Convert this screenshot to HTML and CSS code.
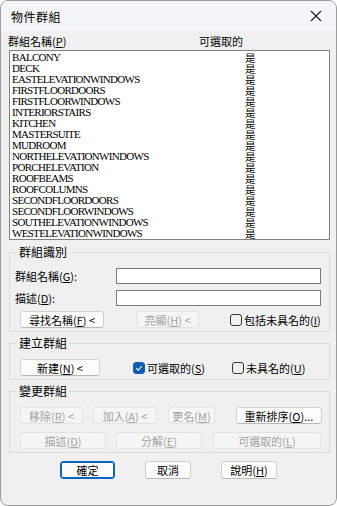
FILE: index.html
```html
<!DOCTYPE html>
<html lang="zh-Hant">
<head>
    <meta charset="UTF-8">
    <title>物件群組</title>
    <link rel="stylesheet" href="styles.css">
</head>
<body>
    <div class="dialog">
        <div class="titlebar">
            <span class="title">物件群組</span>
            <svg class="close" width="12" height="12" viewBox="0 0 12 12">
                <path d="M1 1 L11 11 M11 1 L1 11" stroke="#1a1a1a" stroke-width="1.1" fill="none"/>
            </svg>
        </div>

        <div class="content">
            <div class="list-head">
                <span class="col-name">群組名稱(<u>P</u>)</span>
                <span class="col-sel">可選取的</span>
            </div>
            <div class="list" id="list"></div>

            <fieldset class="group g-ident">
                <legend>群組識別</legend>
                <div class="field">
                    <label>群組名稱(<u>G</u>):</label>
                    <input type="text">
                </div>
                <div class="field f2">
                    <label>描述(<u>D</u>):</label>
                    <input type="text">
                </div>
                <div class="row">
                    <button class="btn w84">尋找名稱(<u>F</u>) &lt;</button>
                    <button class="btn w63 dis ml32">亮顯(<u>H</u>) &lt;</button>
                    <label class="chk ml31"><span class="box"></span>包括未具名的(<u>I</u>)</label>
                </div>
            </fieldset>

            <fieldset class="group g-create">
                <legend>建立群組</legend>
                <div class="row">
                    <button class="btn w80">新建(<u>N</u>) &lt;</button>
                    <label class="chk ml33"><span class="box on"><svg width="10" height="10" viewBox="0 0 10 10"><path d="M2.2 5.2 L4.2 7.2 L8 3" stroke="#fff" stroke-width="1.1" fill="none"/></svg></span>可選取的(<u>S</u>)</label>
                    <label class="chk ml27"><span class="box"></span>未具名的(<u>U</u>)</label>
                </div>
            </fieldset>

            <fieldset class="group g-change">
                <legend>變更群組</legend>
                <div class="row">
                    <button class="btn w63 dis">移除(<u>R</u>) &lt;</button>
                    <button class="btn w64 dis ml10">加入(<u>A</u>) &lt;</button>
                    <button class="btn w47 dis ml11">更名(<u>M</u>)</button>
                    <button class="btn w86 ml20">重新排序(<u>O</u>)...</button>
                </div>
                <div class="row r2">
                    <button class="btn w86 dis">描述(<u>D</u>)</button>
                    <button class="btn w86 dis ml10">分解(<u>E</u>)</button>
                    <button class="btn w108 dis ml11">可選取的(<u>L</u>)</button>
                </div>
            </fieldset>

            <div class="actions">
                <button class="btn w55 default">確定</button>
                <button class="btn w46">取消</button>
                <button class="btn w56">說明(<u>H</u>)</button>
            </div>
        </div>
    </div>

    <script>
        const groups = ["BALCONY", "DECK", "EASTELEVATIONWINDOWS", "FIRSTFLOORDOORS", "FIRSTFLOORWINDOWS",
            "INTERIORSTAIRS", "KITCHEN", "MASTERSUITE", "MUDROOM", "NORTHELEVATIONWINDOWS", "PORCHELEVATION",
            "ROOFBEAMS", "ROOFCOLUMNS", "SECONDFLOORDOORS", "SECONDFLOORWINDOWS", "SOUTHELEVATIONWINDOWS",
            "WESTELEVATIONWINDOWS"];
        let html = "";
        for (let i = 0; i < groups.length; i++) {
            html += `<div class="item"><span class="name">${groups[i]}</span><span class="yes">是</span></div>`;
        }
        document.getElementById('list').innerHTML = html;
    </script>
</body>
</html>
```

FILE: styles.css
```css
body {
    margin: 0;
    font-family: "Noto Sans CJK TC", "Noto Sans", sans-serif;
    font-size: 11px;
    color: #000;
}
.dialog {
    width: 337px;
    height: 506px;
    box-sizing: border-box;
    border: 1px solid #9c9c9c;
    border-radius: 8px;
    background: #f0f0f0;
    overflow: hidden;
}
.titlebar {
    height: 30px;
    background: #f3f5f8;
    display: flex;
    align-items: center;
    justify-content: space-between;
    padding: 0 10px 0 10px;
}
.title {
    font-size: 12px;
    letter-spacing: 0.5px;
}
.close {
    margin-right: 4px;
}
.content {
    padding: 0 6px 0 8px;
}
.list-head {
    height: 18px;
    display: flex;
    align-items: center;
    padding-top: 1px;
}
.col-name {
    width: 191px;
    margin-left: -1px;
}
.list {
    height: 190px;
    box-sizing: border-box;
    border: 1px solid #828282;
    background: #fff;
    padding: 1px 0 0 2px;
    overflow: hidden;
}
.item {
    display: flex;
    height: 11px;
    line-height: 11px;
}
.name {
    width: 233px;
    font-family: "Liberation Serif", serif;
    font-size: 11px;
    letter-spacing: -0.7px;
}
.yes {
    font-size: 10.5px;
    line-height: 11px;
}
.group {
    margin: 5px 0 0 0;
    padding: 0 7px 3px 4px;
    border: 1px solid #dcdcdc;
    border-radius: 0;
}
.group legend {
    padding: 0 2px;
    margin-left: 3px;
    font-size: 12px;
    line-height: 14px;
}
.g-create, .g-change {
    margin-top: 4px;
}
.field {
    display: flex;
    align-items: center;
    height: 16px;
    margin-top: 9px;
}
.field.f2 {
    margin-top: 6px;
}
.field label {
    width: 101px;
    padding-left: 1px;
}
.field input {
    width: 205px;
    height: 16px;
    box-sizing: border-box;
    border: 1px solid #7a7a7a;
    margin: 0;
}
.row {
    display: flex;
    align-items: center;
    height: 17px;
    margin-top: 5px;
    padding-left: 6px;
}
.g-create .row, .g-change .row {
    margin-top: 9px;
}
.g-change .row.r2 {
    margin-top: 8px;
}
.btn {
    height: 17px;
    box-sizing: border-box;
    border: 1px solid #d0d0d0;
    border-bottom-color: #b8b8b8;
    border-radius: 3px;
    background: #fdfdfd;
    font-family: "Noto Sans CJK TC", "Noto Sans", sans-serif;
    font-size: 11px;
    line-height: 14px;
    padding: 0;
    color: #000;
}
.btn.dis {
    background: #f5f5f5;
    border-color: #e3e3e3;
    color: #a2a2a2;
}
.btn.default {
    border: 1px solid #0a64c2;
    box-shadow: inset 0 0 0 1px #0a64c2;
}
.w46 { width: 46px; }
.w47 { width: 47px; }
.w55 { width: 55px; }
.w56 { width: 56px; }
.w63 { width: 63px; }
.w64 { width: 64px; }
.w80 { width: 80px; }
.w84 { width: 84px; }
.w86 { width: 86px; }
.w108 { width: 108px; }
.ml10 { margin-left: 10px; }
.ml11 { margin-left: 11px; }
.ml20 { margin-left: 21px; }
.ml27 { margin-left: 27px; }
.ml31 { margin-left: 31px; }
.ml32 { margin-left: 32px; }
.ml33 { margin-left: 33px; }
.chk {
    display: flex;
    align-items: center;
}
.box {
    width: 12px;
    height: 12px;
    box-sizing: border-box;
    border: 1px solid #333;
    border-radius: 3px;
    margin-right: 2px;
    display: flex;
    align-items: center;
    justify-content: center;
}
.box.on {
    background: #0a5fb4;
    border-color: #0a5fb4;
}
.actions {
    display: flex;
    justify-content: center;
    gap: 30px;
    margin-top: 8px;
    padding-right: 2px;
}
.actions .btn {
    height: 18px;
}
```
